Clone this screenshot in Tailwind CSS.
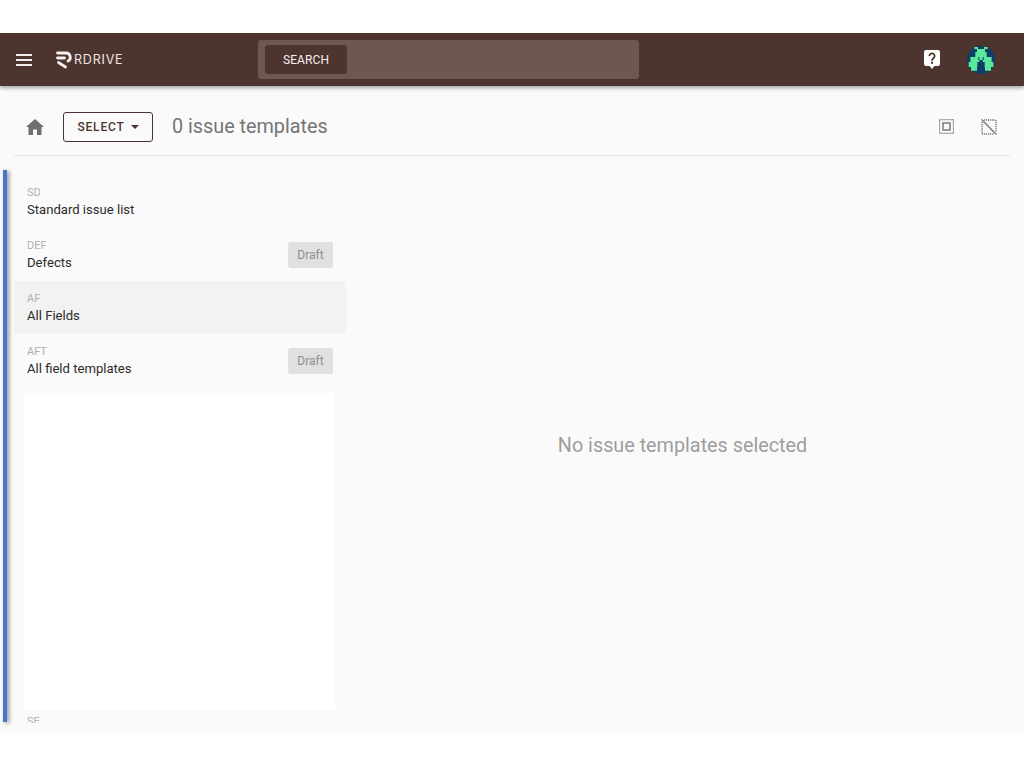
<!DOCTYPE html>
<html lang="en">
<head>
    <meta charset="UTF-8">
    <title>Issue templates</title>
    <script src="https://cdn.jsdelivr.net/npm/@tailwindcss/browser@4"></script>
</head>
<body class="bg-white font-['Roboto',sans-serif] overflow-hidden">
    <div class="h-[33px]"></div>
    <div class="h-[702px] bg-[#fafafa] overflow-hidden flex flex-col">

        <!-- Header -->
        <header class="relative z-10 h-[53px] shrink-0 bg-[#4e342e] shadow-[0_2px_4px_rgba(0,0,0,0.35)] flex items-center text-white">
            <svg class="ml-[16px] w-[16px] h-[12px]" viewBox="0 0 16 12" fill="#f0eceb"><rect y="0" width="16" height="2"/><rect y="5" width="16" height="2"/><rect y="10" width="16" height="2"/></svg>
            <div class="ml-[24px] w-[68px] flex items-center">
                <svg class="w-[17px] h-[19px] shrink-0" viewBox="0 0 17 19" fill="none" stroke="#f5f1f0" stroke-width="2.800" stroke-linecap="round"><path d="M1.500 3H10a4.300 4.300 0 0 1 2 8.100"/><path d="M1.500 8H8.500"/><path d="M2.500 12.500L9.500 17"/></svg>
                <span class="ml-[1px] mt-[1px] font-['Inter',sans-serif] text-[12.500px] leading-none tracking-[0.8px] text-[#ece6e4]">RDRIVE</span>
            </div>
            <div class="ml-[134px] w-[381px] h-[39px] rounded-[3px] bg-[#6d5850] flex items-center pl-[7px]">
                <button class="w-[82px] h-[29px] rounded-[3px] bg-[#4e342e] text-[12px] tracking-[0.1px] text-[#f3efee]">SEARCH</button>
            </div>
            <svg class="ml-[285px] w-[16px] h-[19px]" viewBox="0 0 16 19"><path fill="#fff" d="M2 0H14a2 2 0 0 1 2 2V14a2 2 0 0 1-2 2H10.500L8 19 5.500 16H2a2 2 0 0 1-2-2V2a2 2 0 0 1 2-2Z"/><path fill="none" stroke="#4e342e" stroke-width="1.800" d="M5.400 6a2.600 2.600 0 1 1 4 2.200C8.400 8.900 8 9.400 8 10.700"/><rect x="7" y="11.800" width="2" height="2" fill="#4e342e"/></svg>
            <svg class="ml-[27px] w-[28px] h-[28px]" viewBox="0 0 84 84">
                <circle cx="42" cy="42" r="42" fill="#0f3f66"/>
                <path fill="#5ae89c" d="M22 3h11v6h-11zM51 3h11v6h-11zM30 9h24v9h-24zM25 18h34v15h-34zM10 33h24v15h-24zM37 33h10v9h-10zM50 33h24v15h-24zM5 48h26v15h-26zM53 48h26v15h-26zM12 63h18v11h-18zM54 63h18v11h-18zM34 42h3v6h-3zM47 42h3v6h-3z"/>
            </svg>
        </header>

        <!-- Toolbar -->
        <div class="mx-[14px] h-[70px] shrink-0 border-b border-[#e6e6e6] pt-[12px] flex items-center">
            <svg class="ml-[12px] w-[18px] h-[16px]" viewBox="0 0 18 16" fill="#6f6f6f"><path d="M7 16V10.500H11V16H15.500V8H18L9 0 0 8H2.500V16Z"/></svg>
            <button class="ml-[19px] w-[90px] h-[30px] rounded-[3px] border border-[#4e342e] text-[12px] font-medium tracking-[0.8px] text-[#4e342e] flex items-center justify-center gap-[6px]">
                SELECT
                <span class="w-0 h-0 border-x-[4.500px] border-x-transparent border-t-[4.500px] border-t-[#4e342e]"></span>
            </button>
            <div class="ml-[19px] mt-[1px] text-[19.800px] text-[#757575]">0 issue templates</div>
            <svg class="ml-auto w-[15px] h-[15px]" viewBox="0 0 15 15" fill="none" stroke="#7a7a7a"><rect x="0.500" y="0.500" width="14" height="14" stroke-width="1.300" stroke-dasharray="1.200 0.800"/><rect x="4" y="4" width="7" height="7" stroke-width="1.500"/></svg>
            <svg class="ml-[27px] mr-[13px] w-[16px] h-[16px]" viewBox="0 0 16 16" fill="none" stroke="#7a7a7a"><path stroke-width="1.300" d="M3 1H15V13" stroke-dasharray="1.200 0.800"/><path stroke-width="1.300" d="M1 3V15H13" stroke-dasharray="1.200 0.800"/><path stroke-width="1.500" d="M0.500 0.500L15.500 15.500"/></svg>
        </div>

        <!-- Body -->
        <div class="flex-1 min-h-0 flex">
            <div class="w-[4px] ml-[3px] mt-[14px] mb-[13px] bg-[#4576c9] shadow-[2px_1px_4px_rgba(0,0,0,0.45)] shrink-0"></div>

            <aside class="ml-[7px] mt-[19px] mb-[12px] w-[332px] shrink-0 flex flex-col overflow-hidden text-[13.100px]">
                <div class="h-[53px] shrink-0 px-[13px] flex items-center justify-between">
                    <div>
                        <div class="text-[11px] leading-[16px] text-[#b0b0b0]">SD</div>
                        <div class="leading-[17px] text-[#2b2b2b]">Standard issue list</div>
                    </div>
                </div>
                <div class="h-[53px] shrink-0 px-[13px] flex items-center justify-between">
                    <div>
                        <div class="text-[11px] leading-[16px] text-[#b0b0b0]">DEF</div>
                        <div class="leading-[17px] text-[#2b2b2b]">Defects</div>
                    </div>
                    <span class="w-[45px] h-[26px] rounded-[3px] bg-[#e0e0e0] text-[12px] text-[#8f8f8f] flex items-center justify-center">Draft</span>
                </div>
                <div class="h-[53px] shrink-0 px-[13px] flex items-center justify-between bg-[#f2f2f2]">
                    <div>
                        <div class="text-[11px] leading-[16px] text-[#b0b0b0]">AF</div>
                        <div class="leading-[17px] text-[#2b2b2b]">All Fields</div>
                    </div>
                </div>
                <div class="h-[53px] shrink-0 px-[13px] flex items-center justify-between">
                    <div>
                        <div class="text-[11px] leading-[16px] text-[#b0b0b0]">AFT</div>
                        <div class="leading-[17px] text-[#2b2b2b]">All field templates</div>
                    </div>
                    <span class="w-[45px] h-[26px] rounded-[3px] bg-[#e0e0e0] text-[12px] text-[#8f8f8f] flex items-center justify-center">Draft</span>
                </div>
                <div class="ml-[10px] mt-[6px] w-[311px] h-[317px] shrink-0 bg-white"></div>
                <div class="pl-[13px] mt-[4px] h-[9px] shrink-0 overflow-hidden text-[11px] leading-[16px] text-[#b0b0b0]">SE</div>
            </aside>

            <main class="flex-1 flex justify-center pt-[276px] pr-[5px] text-[19.800px] leading-[28px] text-[#9e9e9e]">
                No issue templates selected
            </main>
        </div>
    </div>
</body>
</html>
